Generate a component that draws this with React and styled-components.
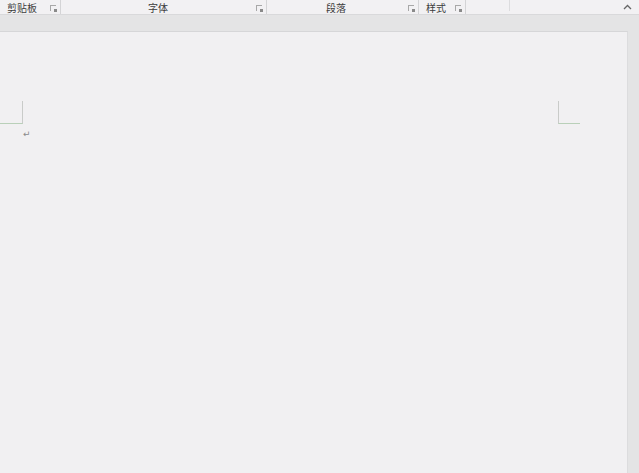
import React from 'react'
import styled, { createGlobalStyle } from 'styled-components'

const GlobalStyle = createGlobalStyle`
	html, body {
		margin: 0;
		padding: 0;
		background: #e4e4e5;
		font-family: "Noto Sans CJK SC", "Microsoft YaHei", sans-serif;
	}
`

const groups = [
	{ label: '剪贴板', width: 61, align: 'flex-start', pad: 7 },
	{ label: '字体', width: 206, align: 'flex-start', pad: 87 },
	{ label: '段落', width: 152, align: 'flex-start', pad: 59 },
	{ label: '样式', width: 47, align: 'flex-start', pad: 7 },
]

const App = () => {
	return (
		<>
			<GlobalStyle />
			<Screen>
				<Ribbon>
					{groups.map((g) => (
						<Group key={g.label} $width={g.width} $align={g.align} $pad={g.pad}>
							<Label>{g.label}</Label>
							<Launcher />
						</Group>
					))}
					<EmptyGroup />
					<Collapse>
						<svg width="9" height="6" viewBox="0 0 9 6">
							<path d="M1 5 L4.5 1.5 L8 5" fill="none" stroke="#666" strokeWidth="1.3" />
						</svg>
					</Collapse>
				</Ribbon>
				<Gutter />
				<Workspace>
					<Page>
						<MarginRow>
							<CornerLeft />
							<CornerRight />
						</MarginRow>
						<Pilcrow>↵</Pilcrow>
					</Page>
					<Scrollbar />
				</Workspace>
			</Screen>
		</>
	)
}

const Screen = styled.div`
	width: 639px;
	height: 473px;
	overflow: hidden;
	display: flex;
	flex-direction: column;
	background: #e4e4e5;
`

const Ribbon = styled.div`
	height: 14px;
	flex-shrink: 0;
	display: flex;
	align-items: stretch;
	background: #f2f1f3;
	border-bottom: 1px solid #d9d9db;
	position: relative;
`

const Group = styled.div`
	width: ${(p) => p.$width}px;
	box-sizing: border-box;
	display: flex;
	align-items: center;
	justify-content: ${(p) => p.$align};
	padding-left: ${(p) => p.$pad}px;
	border-right: 1px solid #d4d4d6;
	position: relative;
`

const EmptyGroup = styled.div`
	width: 43px;
	border-right: 1px solid #dcdcde;
	margin-bottom: 3px;
`

const Label = styled.span`
	font-size: 10px;
	line-height: 14px;
	color: #3c3c3c;
	padding-top: 1px;
`

const Launcher = styled.span`
	position: absolute;
	right: 4px;
	top: 5px;
	width: 5px;
	height: 5px;
	border-left: 1px solid #a8a8a8;
	border-top: 1px solid #a8a8a8;
	&::after {
		content: '';
		position: absolute;
		right: -1px;
		bottom: -1px;
		width: 3px;
		height: 3px;
		background: #8a8a8a;
	}
`

const Collapse = styled.div`
	position: absolute;
	right: 7px;
	top: 4px;
	display: flex;
`

const Gutter = styled.div`
	height: 16px;
	flex-shrink: 0;
	background: #e4e4e5;
`

const Workspace = styled.div`
	flex: 1;
	display: flex;
`

const Page = styled.div`
	flex: 1;
	background: #f1f0f2;
	border-top: 1px solid #d6d6d8;
	border-right: 1px solid #dcdcde;
	padding-top: 69px;
	position: relative;
`

const MarginRow = styled.div`
	display: flex;
	justify-content: space-between;
	width: 580px;
	height: 23px;
`

const CornerLeft = styled.div`
	width: 22px;
	height: 22px;
	border-right: 1px solid #c9cbc9;
	border-bottom: 1px solid #b9d0b9;
`

const CornerRight = styled.div`
	width: 21px;
	height: 22px;
	border-left: 1px solid #c9cbc9;
	border-bottom: 1px solid #b9d0b9;
`

const Pilcrow = styled.div`
	margin-left: 23px;
	margin-top: 5px;
	font-size: 9px;
	line-height: 10px;
	color: #8a8a8a;
	font-family: "DejaVu Sans", sans-serif;
`

const Scrollbar = styled.div`
	width: 11px;
	background: #e4e4e5;
`

export default App
